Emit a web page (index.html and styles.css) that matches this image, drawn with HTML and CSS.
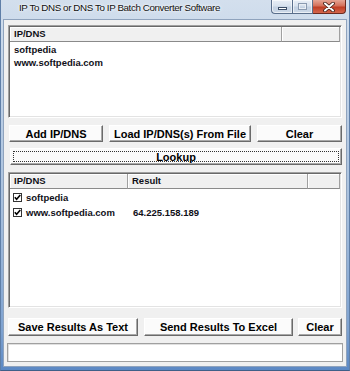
FILE: index.html
```html
<!DOCTYPE html>
<html>
<head>
<meta charset="utf-8">
<link rel="stylesheet" href="styles.css">
</head>
<body>
<div class="window">
  <div class="titlebar">
    <span class="title">IP To DNS or DNS To IP Batch Converter Software</span>
    <div class="caption">
      <span class="cb min"><span class="min-bar"></span></span>
      <span class="cb max"><span class="max-box"></span></span>
      <span class="cb close">
        <svg width="14" height="10" viewBox="0 0 14 10"><path d="M3 1.5 L11 8.5 M11 1.5 L3 8.5" stroke="#3a1a14" stroke-width="3.6" stroke-linecap="round"/><path d="M3 1.5 L11 8.5 M11 1.5 L3 8.5" stroke="#ffffff" stroke-width="2" stroke-linecap="round"/></svg>
      </span>
    </div>
  </div>
  <div class="client">
    <div class="list list1">
      <div class="lhead">
        <span class="hc w1">IP/DNS</span>
        <span class="hc grow"></span>
      </div>
      <div class="row"><span class="cell">softpedia</span></div>
      <div class="row"><span class="cell">www.softpedia.com</span></div>
    </div>
    <div class="btnrow row1">
      <button class="btn">Add IP/DNS</button>
      <button class="btn">Load IP/DNS(s) From File</button>
      <button class="btn">Clear</button>
    </div>
    <button class="btn lookup"><span class="focus">Lookup</span></button>
    <div class="list list2">
      <div class="lhead">
        <span class="hc w2a">IP/DNS</span>
        <span class="hc w2b">Result</span>
        <span class="hc grow"></span>
      </div>
      <div class="row row2l">
        <span class="cell c2a"><span class="chk"><svg width="9" height="9" viewBox="0 0 9 9"><path d="M1.8 4.2 L3.6 6.2 L7.3 2" fill="none" stroke="#000" stroke-width="1.6"/></svg></span>softpedia</span>
      </div>
      <div class="row row2l">
        <span class="cell c2a"><span class="chk"><svg width="9" height="9" viewBox="0 0 9 9"><path d="M1.8 4.2 L3.6 6.2 L7.3 2" fill="none" stroke="#000" stroke-width="1.6"/></svg></span>www.softpedia.com</span>
        <span class="cell c2b">64.225.158.189</span>
      </div>
    </div>
    <div class="btnrow row2">
      <button class="btn">Save Results As Text</button>
      <button class="btn">Send Results To Excel</button>
      <button class="btn">Clear</button>
    </div>
    <div class="status"></div>
  </div>
</div>
</body>
</html>
```

FILE: styles.css
```css
* { box-sizing: border-box; }
html, body { margin: 0; padding: 0; }
body { width: 350px; height: 371px; overflow: hidden; background: #fff; }

.window {
  width: 350px;
  height: 371px;
  display: flex;
  flex-direction: column;
  background: linear-gradient(to bottom, #d3dfed 0px, #c4d5e9 60px, #a9c1de 200px, #7ea2d0 330px, #5b88c4 371px);
  border-left: 1px solid #5f7fa8;
  border-right: 1px solid #5f7fa8;
  border-bottom: 1px solid #3f5f88;
}

.titlebar {
  height: 19px;
  display: flex;
  align-items: flex-start;
  flex: none;
}
.title {
  font-family: "Liberation Sans", Arial, sans-serif;
  font-size: 9.8px;
  letter-spacing: -0.4px;
  color: #101010;
  padding-left: 18px;
  padding-top: 3px;
  line-height: 10px;
  text-shadow: 0 0 4px #ffffff, 0 0 2px #ffffff;
}
.caption {
  margin-left: auto;
  margin-right: 3px;
  display: flex;
  height: 14px;
}
.cb {
  height: 14px;
  display: flex;
  align-items: center;
  justify-content: center;
  border: 1px solid #5a6f8c;
  border-top: none;
}
.min {
  width: 21px;
  border-right: none;
  border-bottom-left-radius: 4px;
  background: linear-gradient(to bottom, #e8eef6 0, #d8e2ee 45%, #c3d1e2 55%, #ccd9e8 100%);
  box-shadow: inset 0 0 0 1px rgba(255,255,255,0.6);
}
.max {
  width: 21px;
  background: linear-gradient(to bottom, #e8eef6 0, #d8e2ee 45%, #c3d1e2 55%, #ccd9e8 100%);
  box-shadow: inset 0 0 0 1px rgba(255,255,255,0.6);
}
.close {
  width: 33px;
  border-left: none;
  border-bottom-right-radius: 4px;
  border-color: #6b2a20;
  background: linear-gradient(to bottom, #e6a595 0, #d4705a 45%, #c03e25 55%, #d4664c 100%);
}
.min-bar {
  width: 9px;
  height: 3px;
  margin-top: 3px;
  background: #fff;
  border: 1px solid #3d4f68;
}
.max-box {
  width: 9px;
  height: 7px;
  border: 1px solid #8a9ab0;
  box-shadow: inset 0 0 0 1px #e9eef4;
}

.client {
  flex: none;
  margin: 0 2px;
  height: 348px;
  background: #f0f0f0;
  border: 1px solid #8fa3bd;
  display: flex;
  flex-direction: column;
  padding: 5px 4px 0 4px;
  font-family: "Liberation Sans", Arial, sans-serif;
}

.list {
  background: #fff;
  border: 1px solid;
  border-color: #a0a0a0 #ffffff #ffffff #a0a0a0;
  box-shadow: inset 1px 1px 0 #696969, inset -1px -1px 0 #e3e3e3;
  padding: 1px;
  font-size: 9.5px;
  font-weight: bold;
  color: #101018;
  display: flex;
  flex-direction: column;
}
.list1 { height: 93px; }

.lhead {
  display: flex;
  height: 15px;
  flex: none;
}
.hc {
  background: #f0f0f0;
  border-right: 1px solid #a0a0a0;
  border-bottom: 1px solid #8a8a8a;
  box-shadow: inset 1px 1px 0 #ffffff;
  padding-left: 4px;
  line-height: 14px;
  white-space: nowrap;
}
.w1 { width: 272px; }
.w2a { width: 118px; }
.w2b { width: 180px; }
.grow { flex: 1; }

.row {
  display: flex;
  height: 13px;
  line-height: 13px;
  white-space: nowrap;
}
.list1 .lhead + .row { margin-top: 1px; }
.cell { padding-left: 4px; }
.row2l { height: 15px; line-height: 15px; }
.list2 .lhead + .row2l { margin-top: 1px; }
.c2a { width: 118px; display: flex; align-items: center; padding-left: 3px; }
.c2b { padding-left: 5px; }
.chk {
  width: 9px;
  height: 9px;
  border: 1px solid #333;
  background: #fff;
  margin-right: 4px;
  display: flex;
  flex: none;
}
.chk svg { display: block; margin: -1px; }

.btn {
  font-family: "Liberation Sans", Arial, sans-serif;
  font-weight: bold;
  font-size: 11px;
  color: #000;
  background: #fbfbfb;
  border: 1px solid;
  border-color: #ffffff #6a6a6a #6a6a6a #ffffff;
  box-shadow: inset -1px -1px 0 #a8a8a8;
  padding: 0;
  margin: 0;
  white-space: nowrap;
}

.btnrow { display: grid; }
.row1 {
  margin-top: 7px;
  height: 17px;
  grid-template-columns: 94px 142px 1fr;
  column-gap: 6px;
  padding-left: 1px;
}
.lookup {
  margin-top: 6px;
  margin-left: 2px;
  height: 17px;
  padding: 2px;
  display: flex;
}
.focus {
  flex: 1;
  border: 1px dotted #333;
  line-height: 10px;
  text-align: center;
}
.list2 { height: 136px; margin-top: 7px; }
.row2 {
  margin-top: 10px;
  height: 18px;
  grid-template-columns: 130px 149px 1fr;
  column-gap: 6px;
}
.row2 .btn:last-child { margin-left: -1px; }
.status {
  margin-top: 7px;
  margin-left: -1px;
  margin-right: -1px;
  height: 19px;
  background: #fff;
  border: 1px solid #a0a0a0;
  box-shadow: inset 1px 1px 0 #e0e0e0;
}
```
